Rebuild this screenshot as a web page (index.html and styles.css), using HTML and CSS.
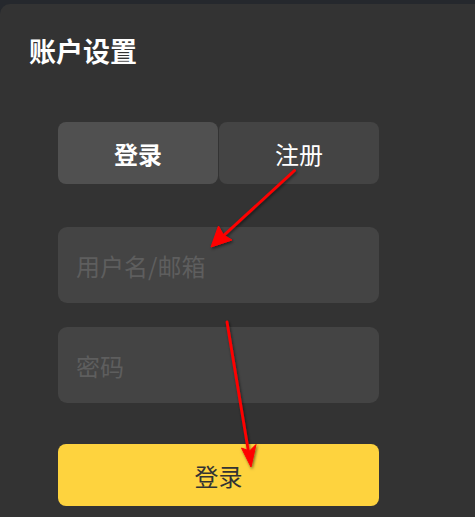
FILE: index.html
```html
<!DOCTYPE html>
<html lang="zh-CN">
<head>
<meta charset="utf-8">
<title>账户设置</title>
<link rel="stylesheet" href="styles.css">
</head>
<body>
<div class="panel">
  <h1 class="title">账户设置</h1>
  <div class="form">
    <div class="tabs">
      <button class="tab active">登录</button>
      <button class="tab">注册</button>
    </div>
    <input class="field field-user" type="text" placeholder="用户名/邮箱">
    <input class="field field-pass" type="password" placeholder="密码">
    <button class="submit">登录</button>
  </div>
</div>
<svg class="arrows" width="475" height="517" viewBox="0 0 475 517" xmlns="http://www.w3.org/2000/svg">
  <defs>
    <filter id="sh" x="-20%" y="-20%" width="140%" height="140%">
      <feDropShadow dx="1" dy="1.5" stdDeviation="1.5" flood-color="#000" flood-opacity="0.55"/>
    </filter>
  </defs>
  <g filter="url(#sh)" fill="#ff0000" stroke="#ff0000">
    <line x1="294.5" y1="170.5" x2="222" y2="237" stroke-width="2.8" stroke-linecap="round"/>
    <polygon points="211,247 218.5,226 223.5,235 232,240" stroke-width="1" stroke-linejoin="round"/>
    <line x1="227" y1="322" x2="249" y2="455" stroke-width="2.8" stroke-linecap="round"/>
    <polygon points="251,467 241.5,448 249.5,451 256,444.5" stroke-width="1" stroke-linejoin="round"/>
  </g>
</svg>
</body>
</html>
```
FILE: styles.css
```css
html, body {
  margin: 0;
  padding: 0;
}
body {
  background: #25282d;
  width: 475px;
  height: 517px;
  overflow: hidden;
  position: relative;
  font-family: "Noto Sans CJK SC", "Noto Sans", sans-serif;
}
.panel {
  margin-top: 4px;
  background: #333333;
  border-radius: 10px 0 0 0;
  height: 513px;
  padding: 33px 0 0 29px;
  box-sizing: border-box;
}
.title {
  margin: 0;
  font-size: 27px;
  line-height: 27px;
  font-weight: 700;
  color: #ffffff;
}
.form {
  margin: 58px 0 0 29px;
  width: 321px;
  display: flex;
  flex-direction: column;
}
.tabs {
  display: grid;
  grid-template-columns: 1fr 1fr;
  gap: 1px;
  height: 62px;
}
.tab {
  border: none;
  border-radius: 8px;
  background: #444444;
  color: #ffffff;
  font-family: inherit;
  font-size: 24px;
  font-weight: 400;
  padding: 0;
}
.tab.active {
  background: #505050;
  font-weight: 700;
}
.field {
  border: none;
  outline: none;
  border-radius: 9px;
  background: #444444;
  height: 76px;
  padding: 0 18px;
  box-sizing: border-box;
  font-family: inherit;
  font-size: 24px;
  color: #ffffff;
}
.field::placeholder {
  color: #5e5e5e;
}
.field-user {
  margin-top: 43px;
}
.field-pass {
  margin-top: 24px;
}
.submit {
  margin-top: 41px;
  height: 62px;
  border: none;
  border-radius: 8px;
  background: #fed33e;
  color: #333333;
  font-family: inherit;
  font-size: 24px;
  padding: 0;
}
.arrows {
  position: absolute;
  left: 0;
  top: 0;
  pointer-events: none;
}
```
